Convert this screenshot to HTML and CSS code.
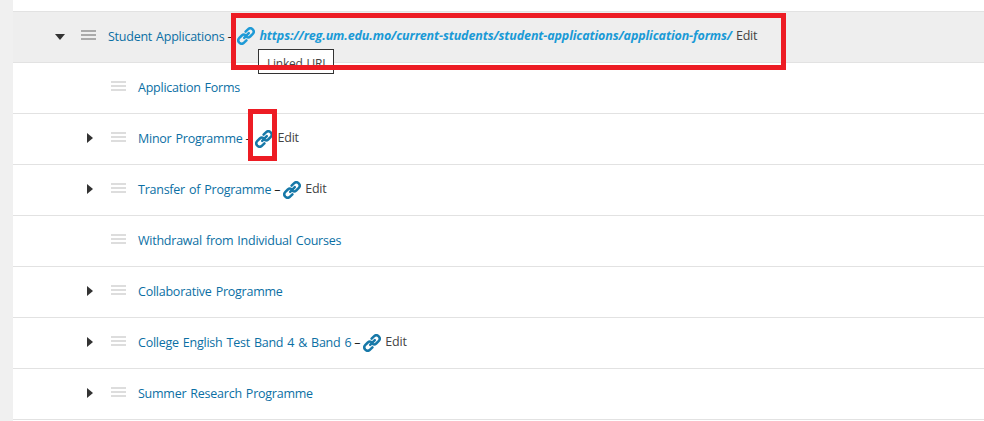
FILE: index.html
```html
<!DOCTYPE html>
<html lang="en">
<head>
<meta charset="utf-8">
<title>Menu</title>
<link rel="stylesheet" href="styles.css">
</head>
<body>
<svg class="defs" width="0" height="0" aria-hidden="true">
  <symbol id="clip" viewBox="0 0 18 18">
    <path d="M7.2 10.8 L11.8 6.2" fill="none" stroke="currentColor" stroke-width="2.5" stroke-linecap="round"/>
    <path d="M8.6 4.6 L10.9 2.4 C12.3 1 14.3 1 15.7 2.3 C17 3.7 17 5.7 15.6 7.1 L13.2 9.5 C12.2 10.4 11 10.6 9.9 10.2" fill="none" stroke="currentColor" stroke-width="2.5" stroke-linecap="round"/>
    <path d="M9.4 13.4 L7.1 15.6 C5.7 17 3.7 17 2.3 15.7 C1 14.3 1 12.3 2.4 10.9 L4.8 8.5 C5.8 7.6 7 7.4 8.1 7.8" fill="none" stroke="currentColor" stroke-width="2.5" stroke-linecap="round"/>
  </symbol>
</svg>
<main class="page">
  <ul class="menu">
    <li class="row row-active">
      <span class="toggle"><i class="arrow-down"></i></span>
      <span class="handle handle-dark"></span>
      <a class="title">Student Applications</a>
      <span class="dash">–</span>
      <svg class="clip clip-bright"><use href="#clip"/></svg>
      <a class="url">https://reg.um.edu.mo/current-students/student-applications/application-forms/</a>
      <span class="edit">Edit</span>
    </li>
    <li class="row row-child">
      <span class="toggle"></span>
      <span class="handle"></span>
      <a class="title">Application Forms</a>
    </li>
    <li class="row row-child">
      <span class="toggle"><i class="arrow-right"></i></span>
      <span class="handle"></span>
      <a class="title">Minor Programme</a>
      <span class="dash">–</span>
      <svg class="clip"><use href="#clip"/></svg>
      <span class="edit edit-tight">Edit</span>
    </li>
    <li class="row row-child">
      <span class="toggle"><i class="arrow-right"></i></span>
      <span class="handle"></span>
      <a class="title">Transfer of Programme</a>
      <span class="dash">–</span>
      <svg class="clip"><use href="#clip"/></svg>
      <span class="edit">Edit</span>
    </li>
    <li class="row row-child">
      <span class="toggle"></span>
      <span class="handle"></span>
      <a class="title">Withdrawal from Individual Courses</a>
    </li>
    <li class="row row-child">
      <span class="toggle"><i class="arrow-right"></i></span>
      <span class="handle"></span>
      <a class="title">Collaborative Programme</a>
    </li>
    <li class="row row-child">
      <span class="toggle"><i class="arrow-right"></i></span>
      <span class="handle"></span>
      <a class="title">College English Test Band 4 &amp; Band 6</a>
      <span class="dash">–</span>
      <svg class="clip"><use href="#clip"/></svg>
      <span class="edit">Edit</span>
    </li>
    <li class="row row-child">
      <span class="toggle"><i class="arrow-right"></i></span>
      <span class="handle"></span>
      <a class="title">Summer Research Programme</a>
    </li>
  </ul>
  <div class="tooltip">Linked URL</div>
  <div class="mark mark-url"></div>
  <div class="mark mark-icon"></div>
</main>
</body>
</html>
```
FILE: styles.css
```css
* { box-sizing: border-box; }
html, body { margin: 0; padding: 0; }
body {
  background: #fff;
  font-family: "Open Sans", "Noto Sans", "Liberation Sans", sans-serif;
  font-size: 12.5px;
  letter-spacing: -0.24px;
  word-spacing: 1px;
  color: #444;
  overflow: hidden;
}
.defs { position: absolute; }
.page {
  position: relative;
  width: 984px;
  height: 421px;
  padding: 11px 0 0 13px;
  background: #fff;
  overflow: hidden;
}
.page::before {
  content: "";
  position: absolute;
  left: 0;
  top: 0;
  width: 13px;
  height: 100%;
  background: #f0f0f0;
}
.menu {
  list-style: none;
  margin: 0;
  padding: 0;
  border-top: 1px solid #e2e2e2;
}
.row {
  display: flex;
  align-items: center;
  height: 51px;
  padding-left: 41px;
  border-bottom: 1px solid #e2e2e2;
  white-space: nowrap;
}
.row-active { background: #eee; }
.row-child { padding-left: 71px; }
.toggle {
  flex: none;
  display: flex;
  align-items: center;
  width: 27px;
  height: 12px;
  padding-left: 3px;
}
.row-active .toggle { padding-left: 1px; }
.arrow-down {
  width: 0;
  height: 0;
  margin-top: -1px;
  border-left: 5.5px solid transparent;
  border-right: 5.5px solid transparent;
  border-top: 6px solid #333;
}
.arrow-right {
  width: 0;
  height: 0;
  margin-top: -3px;
  border-top: 5.5px solid transparent;
  border-bottom: 5.5px solid transparent;
  border-left: 6px solid #333;
}
.handle {
  flex: none;
  width: 15px;
  height: 10px;
  margin: -5px 12px 0 0;
  background: repeating-linear-gradient(#ddd 0 2px, transparent 2px 4px);
}
.handle-dark {
  background: repeating-linear-gradient(#aaa 0 2px, transparent 2px 4px);
}
.title { margin-top: -2px; color: #0b6fa4; }
.dash { margin: -2px 0 0 3px; color: #222; }
.clip {
  flex: none;
  width: 18px;
  height: 18px;
  margin: -1px 0 0 3px;
  color: #1678a8;
}
.clip-bright { margin: -3px 0 0 4px; color: #1e9ad6; }
.url {
  margin: -3px 0 0 4px;
  color: #1a9ad6;
  font-weight: 700;
  font-style: italic;
  letter-spacing: -0.13px;
}
.edit { margin: -4px 0 0 4px; color: #444; }
.edit-tight { margin-left: 5px; }
.tooltip {
  position: absolute;
  left: 258px;
  top: 49px;
  width: 76px;
  height: 25px;
  padding: 6px 0 0 8px;
  font-size: 12px;
  line-height: 16px;
  background: #fff;
  border: 1px solid #333;
}
.mark {
  position: absolute;
  border: 5px solid #ed1c24;
}
.mark-url { left: 231px; top: 13px; width: 555px; height: 57px; }
.mark-icon { left: 248px; top: 109px; width: 29px; height: 52px; }
```
